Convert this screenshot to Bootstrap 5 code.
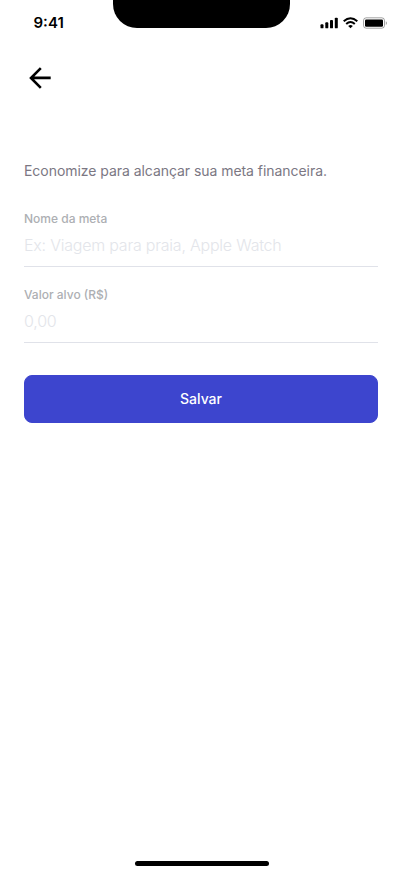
<!DOCTYPE html>
<html lang="pt-BR">
<head>
<meta charset="utf-8">
<meta name="viewport" content="width=device-width, initial-scale=1">
<title>Nova meta</title>
<link href="https://cdn.jsdelivr.net/npm/bootstrap@5.3.0/dist/css/bootstrap.min.css" rel="stylesheet">
<style>
body{font-family:Inter,"Liberation Sans",sans-serif;color:#000;background:#fff}
.screen{height:874px}
.status-bar{height:46px;padding:0 15px 0 33.5px}
.clock{font-size:15px;font-weight:600;line-height:20px;letter-spacing:0}
.notch{width:177px;height:28px;left:113px;top:0;background:#000;border-radius:0 0 24px 24px}
.top-nav{padding:16px 24px 0;height:64px}
.back-link{width:32px;height:32px;border:0;background:none}
.goal-form{padding:50px 24px 0}
.intro{font-size:14px;line-height:22px;letter-spacing:-.05px;color:#7b7783;margin-bottom:29px}
.goal-fields{gap:20px;margin-bottom:32px}
.goal-label{font-size:12px;line-height:16px;font-weight:500;letter-spacing:0;color:#adafb3}
.goal-input,.goal-input:focus{font-size:16px;line-height:24px;letter-spacing:-.22px;height:40px;padding:0 0 3px;border:0;border-bottom:1px solid #e0e2e9;border-radius:0;background:transparent;box-shadow:none}
.goal-input::placeholder{color:#e3e5ea;opacity:1;font-weight:300}
.save-btn{--bs-btn-bg:#3d45ce;--bs-btn-border-color:#3d45ce;--bs-btn-hover-bg:#343bb5;--bs-btn-color:#fff;height:48px;padding:5px 12px 7px;border-radius:8px;font-size:14px;font-weight:500;letter-spacing:0}
.home-bar{width:134px;height:5px;margin:0 133px 8px 135px;background:#000}
</style>
</head>
<body>
<div class="screen position-relative d-flex flex-column overflow-hidden">
  <div class="notch position-absolute"></div>
  <header class="status-bar d-flex align-items-center justify-content-between">
    <span class="clock">9:41</span>
    <svg width="67" height="12" viewBox="0 0 67 12" aria-hidden="true">
      <g transform="translate(.5 0)">
      <rect x="0" y="7.3" width="3" height="4" rx=".9"/>
      <rect x="4.8" y="5.3" width="3" height="6" rx=".9"/>
      <rect x="9.5" y="3" width="3" height="8.3" rx=".9"/>
      <rect x="14.3" y=".7" width="3" height="10.6" rx=".9"/>
      <g fill="none" stroke="#000" stroke-width="2">
        <path d="M23.2 4.2Q30 -1.7 36.8 4.2"/>
        <path d="M25.7 7Q30 3 34.3 7"/>
      </g>
      <path d="M27.7 9Q30 7.1 32.3 9L30 11.3Z"/>
      <rect x="43" y=".8" width="21" height="10.4" rx="2.7" fill="none" stroke="#000" stroke-opacity=".36"/>
      <rect x="44.5" y="2.4" width="18" height="7.3" rx="1.2"/>
      <path d="M65.3 4.2v3.8q1.1-.6 1.1-1.9t-1.1-1.9Z" fill-opacity=".4"/>
      </g>
    </svg>
  </header>
  <nav class="top-nav">
    <button type="button" class="back-link p-0 d-flex" aria-label="Voltar">
      <svg width="32" height="32" viewBox="0 0 32 32" fill="none" stroke="#000" stroke-width="2.6"><path d="M26.7 15.9H7.2M16.8 6.2L7 16l9.8 9.8"/></svg>
    </button>
  </nav>
  <main class="goal-form flex-grow-1">
    <p class="intro">Economize para alcançar sua meta financeira.</p>
    <form>
      <div class="goal-fields d-flex flex-column">
        <div class="d-flex flex-column">
          <label class="goal-label" for="nome">Nome da meta</label>
          <input id="nome" class="goal-input form-control" type="text" placeholder="Ex: Viagem para praia, Apple Watch">
        </div>
        <div class="d-flex flex-column">
          <label class="goal-label" for="valor">Valor alvo (R$)</label>
          <input id="valor" class="goal-input form-control" type="text" placeholder="0,00">
        </div>
      </div>
      <button type="button" class="save-btn btn btn-primary w-100">Salvar</button>
    </form>
  </main>
  <div class="home-bar rounded-pill"></div>
</div>
<script src="https://cdn.jsdelivr.net/npm/bootstrap@5.3.0/dist/js/bootstrap.bundle.min.js"></script>
</body>
</html>
